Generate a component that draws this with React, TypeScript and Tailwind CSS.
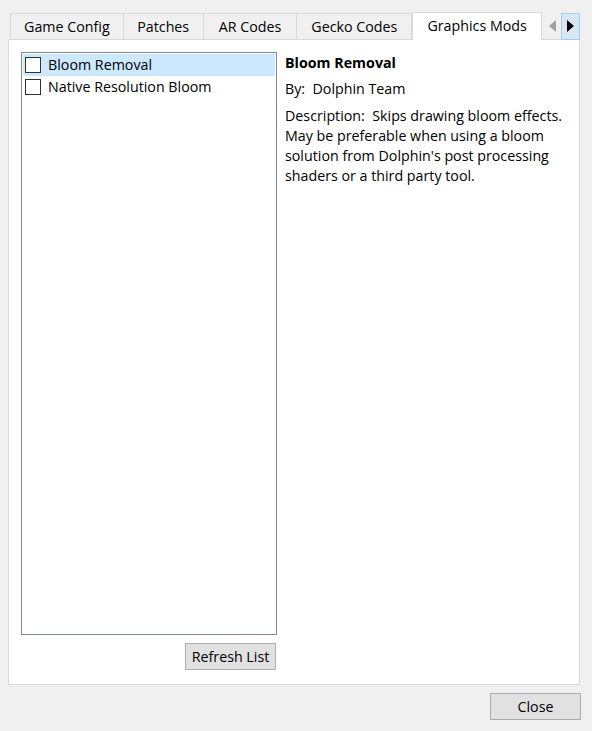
import React from "react";

const tabs = [
  { label: "Game Config", w: 114 },
  { label: "Patches", w: 80 },
  { label: "AR Codes", w: 94 },
  { label: "Gecko Codes", w: 115 },
];

export default function App() {
  return (
    <div
      className="w-[592px] h-[731px] bg-[#f0f0f0] text-[14.25px] text-black flex flex-col"
      style={{ fontFamily: '"Open Sans", "Noto Sans", sans-serif' }}
    >
      <div className="pt-[11px] pl-[8px] pr-[12px]">
        <div className="flex items-end h-[28px] pl-[2px] relative z-10">
          {tabs.map((t, i) => (
            <div
              key={t.label}
              className={`h-[26px] flex items-center justify-center border-t border-[#d9d9d9] bg-[#f0f0f0] ${i === 0 ? "border-l" : ""} border-r`}
              style={{ width: t.w }}
            >
              {t.label}
            </div>
          ))}
          <div className="w-[130px] h-[28px] -mb-px flex items-center justify-center border-t border-l border-r border-[#d9d9d9] bg-white pb-[2px]">
            Graphics Mods
          </div>
          <div className="flex items-center h-[28px] ml-[2px] -mb-px">
            <div className="w-[17px] h-[26px] flex items-center justify-center">
              <svg width="7" height="12" viewBox="0 0 7 12">
                <polygon points="7,0 7,12 0,6" fill="#a0a0a0" />
              </svg>
            </div>
            <div className="w-[19px] h-[27px] flex items-center justify-center bg-[#d9e7f3] border border-[#a9cbe7]">
              <svg width="7" height="12" viewBox="0 0 7 12">
                <polygon points="0,0 0,12 7,6" fill="#000" />
              </svg>
            </div>
          </div>
        </div>
        <div className="h-[646px] border border-[#d9d9d9] bg-white flex pt-[12px] pl-[12px]">
          <div className="flex flex-col w-[256px]">
            <div className="h-[583px] border border-[#828790] p-px">
              {["Bloom Removal", "Native Resolution Bloom"].map((item, i) => (
                <div
                  key={item}
                  className={`h-[22px] flex items-center pl-[2px] pb-px ${i === 0 ? "bg-[#cce8ff]" : ""}`}
                >
                  <div className="w-[16px] h-[16px] border border-[#333333] bg-white mr-[7px]" />
                  <span>{item}</span>
                </div>
              ))}
            </div>
            <div className="flex justify-end mt-[8px] pr-px">
              <button className="w-[91px] h-[27px] bg-[#e1e1e1] border border-[#adadad] flex items-center justify-center">
                Refresh List
              </button>
            </div>
          </div>
          <div className="ml-[8px] pt-px w-[285px]">
            <div className="font-bold leading-[20px]">Bloom Removal</div>
            <div className="mt-[6px] leading-[20px]">By:&nbsp; Dolphin Team</div>
            <div className="mt-[7px] leading-[20px]">
              Description:&nbsp; Skips drawing bloom effects. May be preferable when using a bloom solution from Dolphin's post processing shaders or a third party tool.
            </div>
          </div>
        </div>
      </div>
      <div className="flex justify-end pr-[11px] mt-[8px]">
        <button className="w-[91px] h-[27px] bg-[#e1e1e1] border border-[#adadad] flex items-center justify-center">
          Close
        </button>
      </div>
    </div>
  );
}
